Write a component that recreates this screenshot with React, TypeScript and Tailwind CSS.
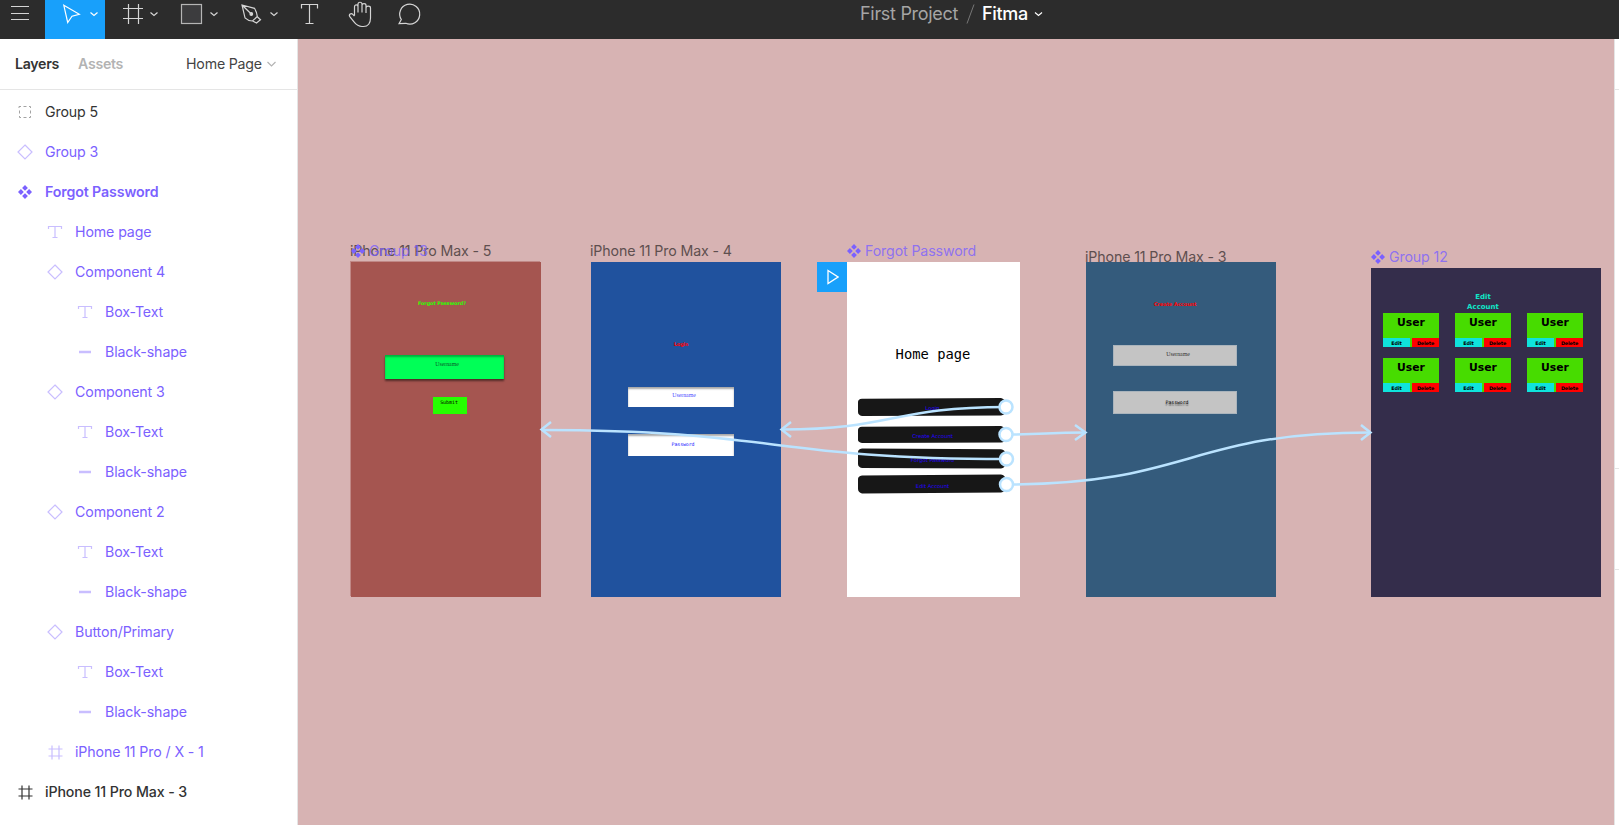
import type { ReactNode } from 'react';

type IconKind = 'group' | 'instance' | 'component' | 'text' | 'line' | 'frame';

type Layer = { name: string; icon: IconKind; depth: 0 | 1 | 2; tone: 'dark' | 'purple'; strong?: 'semibold' | 'medium' };

const layers: Layer[] = [
  { name: 'Group 5', icon: 'group', depth: 0, tone: 'dark' },
  { name: 'Group 3', icon: 'instance', depth: 0, tone: 'purple' },
  { name: 'Forgot Password', icon: 'component', depth: 0, tone: 'purple', strong: 'semibold' },
  { name: 'Home page', icon: 'text', depth: 1, tone: 'purple' },
  { name: 'Component 4', icon: 'instance', depth: 1, tone: 'purple' },
  { name: 'Box-Text', icon: 'text', depth: 2, tone: 'purple' },
  { name: 'Black-shape', icon: 'line', depth: 2, tone: 'purple' },
  { name: 'Component 3', icon: 'instance', depth: 1, tone: 'purple' },
  { name: 'Box-Text', icon: 'text', depth: 2, tone: 'purple' },
  { name: 'Black-shape', icon: 'line', depth: 2, tone: 'purple' },
  { name: 'Component 2', icon: 'instance', depth: 1, tone: 'purple' },
  { name: 'Box-Text', icon: 'text', depth: 2, tone: 'purple' },
  { name: 'Black-shape', icon: 'line', depth: 2, tone: 'purple' },
  { name: 'Button/Primary', icon: 'instance', depth: 1, tone: 'purple' },
  { name: 'Box-Text', icon: 'text', depth: 2, tone: 'purple' },
  { name: 'Black-shape', icon: 'line', depth: 2, tone: 'purple' },
  { name: 'iPhone 11 Pro / X - 1', icon: 'frame', depth: 1, tone: 'purple' },
  { name: 'iPhone 11 Pro Max - 3', icon: 'frame', depth: 0, tone: 'dark', strong: 'medium' },
];

const indent = { 0: 'pl-[17px]', 1: 'pl-[47px]', 2: 'pl-[77px]' };
const weight = { semibold: 'font-semibold', medium: 'font-medium' };

function ComponentMark({ className = '' }: { className?: string }) {
  return (
    <svg viewBox="0 0 16 16" className={`size-4 shrink-0 fill-[#7b61ff] ${className}`}>
      <path d="M8 1l2.900 2.900L8 6.800 5.100 3.900zM8 9.200l2.900 2.900L8 15l-2.900-2.900zM3.900 5.100L6.800 8l-2.900 2.900L1 8zM12.100 5.100L15 8l-2.900 2.900L9.200 8z" />
    </svg>
  );
}

function LayerIcon({ kind, dark }: { kind: IconKind; dark: boolean }) {
  if (kind === 'component') return <ComponentMark />;
  const stroke = dark ? 'stroke-[#333]' : 'stroke-[#c9beff]';
  return (
    <svg viewBox="0 0 16 16" fill="none" className={`size-4 shrink-0 ${stroke}`}>
      {kind === 'group' && (
        <path
          stroke="#a3a3a3"
          d="M2 4V2.500h2M6.500 2.500h3M12 2.500h1.500V4M13.500 6.500v3M13.500 12v1.500H12M9.500 13.500h-3M4 13.500H2.500V12M2.500 9.500v-3"
        />
      )}
      {kind === 'instance' && <path strokeWidth="1.200" d="M8 1L15 8L8 15L1 8Z" />}
      {kind === 'text' && <path strokeWidth="1.200" d="M1.500 5V2.500h13V5M8 2.500v11M5.500 13.500h5" />}
      {kind === 'line' && <path strokeWidth="2.500" d="M2 8h12" />}
      {kind === 'frame' && <path strokeWidth="1.200" d="M5 1.500v14M12 1.500v14M1.500 5h14M1.500 12h14" />}
    </svg>
  );
}

function Tool({ box, className, children }: { box: string; className: string; children: ReactNode }) {
  return (
    <svg
      viewBox={box}
      fill="none"
      stroke="#d5d5d5"
      strokeWidth="1.2"
      className={`h-[39px] shrink-0 ${className}`}
    >
      {children}
    </svg>
  );
}

function Toolbar() {
  return (
    <header className="flex h-[39px] shrink-0 items-start bg-[#2c2c2c]">
      <Tool box="0 0 45 39" className="w-[45px]">
        <path strokeWidth="1" d="M11 6.500h18M11 13.500h18M11 19.500h18" />
      </Tool>
      <Tool box="45 0 60 39" className="w-[60px] bg-[#18a0fb]">
        <g stroke="#fff">
          <path d="M63.800 5.300L79.300 14.300L72 16.200L67.700 22.500Z" />
          <path d="M90.500 12.500l3.500 3 3.500-3" />
        </g>
      </Tool>
      <Tool box="105 0 60 39" className="w-[60px]">
        <path d="M128.500 4v20M138.500 4v20M123 8.500h20M123 18.500h20M150.500 12.500l3.500 3 3.500-3" />
      </Tool>
      <Tool box="165 0 60 39" className="w-[60px]">
        <rect x="181.500" y="4.500" width="20" height="19" fill="#3c3c3e" stroke="#b5b5b5" />
        <path d="M210.500 12.500l3.500 3 3.500-3" />
      </Tool>
      <Tool box="225 0 60 39" className="w-[60px]">
        <path d="M242 5l12.500 3.300c1.800 3 2.700 5.300 2.800 8.200l-4.800 4.500c-3.300-.2-5.500-1.200-7.500-3.200zM242 5l8.500 8.300M257.300 16.800l3.200 3-4 3.200-3.800-2" />
        <circle cx="251.300" cy="14" r="1.300" fill="#d5d5d5" />
        <path d="M270.500 12.500l3.500 3 3.500-3" />
      </Tool>
      <Tool box="285 0 50 39" className="w-[50px]">
        <path d="M301.500 8.500v-4h16v4M309.500 4.500v19M305.500 23.500h8" />
      </Tool>
      <Tool box="335 0 50 39" className="w-[50px]">
        <path d="M354.500 15.500V6.800c0-2.500 3.500-2.500 3.500 0V12.500M358 6.500V4.200c0-2.600 4-2.600 4 0V12.500M362 5.500c0-2.400 4-2.400 4 0V13M366 8c0-2.400 4.500-2.400 4.500 0v10c0 5-2.500 8.500-7 8.500h-1.500c-4 0-6-2-8-4.600l-4-5c-1.800-2.400 1.200-4.400 2.800-2.600l1.700 1.700" />
      </Tool>
      <Tool box="385 0 50 39" className="w-[50px]">
        <path d="M399 23.700l2.300-4.200A10 10 0 1 1 405.800 23.300Z" />
      </Tool>
      <div className="flex h-7 items-center pl-[425px] font-[Inter] text-[18px] leading-7 tracking-[-0.3px]">
        <span className="w-[98px] whitespace-nowrap text-[#a5a5a5]">First Project</span>
        <svg viewBox="0 0 9 20" className="mr-[7px] ml-2 h-5 w-[9px]" fill="none" stroke="#777">
          <path d="M8 .5L1 19.500" />
        </svg>
        <span className="w-[45px] font-medium text-white">Fitma</span>
        <svg viewBox="0 0 9 6" className="ml-[7px] h-1.500 w-[9px]" fill="none" stroke="#fff" strokeWidth="1.200">
          <path d="M1 1.500l3.500 3 3.500-3" />
        </svg>
      </div>
    </header>
  );
}

function Sidebar() {
  return (
    <aside className="flex w-[298px] shrink-0 flex-col border-r border-[#e5e5e5] bg-white text-[14.200px] tracking-[-0.12px]">
      <div className="flex h-[51px] shrink-0 items-center border-b border-[#e5e5e5] pl-[15px] whitespace-nowrap">
        <span className="w-[63px] font-semibold tracking-[-0.3px] text-[#333]">Layers</span>
        <span className="w-[108px] font-semibold tracking-[-0.3px] text-[#b3b3b3]">Assets</span>
        <span className="tracking-[-0.2px] text-[#444]">Home Page</span>
        <svg viewBox="0 0 9 6" className="ml-[5px] h-1.500 w-[9px]" fill="none" stroke="#b3b3b3" strokeWidth="1.200">
          <path d="M.5 1l4 4 4-4" />
        </svg>
      </div>
      <ul className="flex flex-col pt-0.5">
        {layers.map((layer, i) => (
          <li
            key={i}
            className={`flex h-10 shrink-0 items-center gap-3 ${indent[layer.depth]} ${layer.tone === 'dark' ? 'text-[#333]' : 'text-[#7b61ff]'} ${layer.strong ? weight[layer.strong] : ''}`}
          >
            <LayerIcon kind={layer.icon} dark={layer.tone === 'dark'} />
            <span>{layer.name}</span>
          </li>
        ))}
      </ul>
    </aside>
  );
}

function FrameLabel({ className, mark, children }: { className: string; mark?: boolean; children: ReactNode }) {
  return (
    <div
      className={`absolute flex h-5 items-center gap-[3px] whitespace-nowrap text-[14.200px] tracking-[-0.12px] ${mark ? 'text-[#7b61ff]/80' : 'text-[#5e4f4f]'} ${className}`}
    >
      {mark && <ComponentMark className="-ml-px" />}
      <span>{children}</span>
    </div>
  );
}

function Tiny({ className, children }: { className: string; children: ReactNode }) {
  return <div className={`absolute flex justify-center leading-[8px] whitespace-nowrap ${className}`}>{children}</div>;
}

const menu = [
  { label: 'Login', box: 'top-[136px] h-[18px]', text: 'top-[6px]', shape: 'M0 4Q0 1 4 .8L143 0Q147 1 147 4V14Q147 17 143 17.500L4 18Q0 17 0 14Z' },
  { label: 'Create Account', box: 'top-[164px] h-[17px]', text: 'top-[6px]', shape: 'M0 4Q0 1 4 .8L143 0Q147 1 147 4V14Q147 16 143 16.500L4 17Q0 16 0 14Z' },
  { label: 'Forgot Password', box: 'top-[186px] h-[21px]', text: 'top-[8px]', shape: 'M0 4Q0 1 4 .5L143 1.300Q147 2 147 5V16Q147 20 143 20.500L4 20Q0 19 0 16Z' },
  { label: 'Edit Account', box: 'top-[212px] h-[20px]', text: 'top-[8px]', shape: 'M0 5Q0 2 4 1.500L143 0.500Q147 1 147 4V15Q147 18 143 18.500L4 19.500Q0 18 0 15Z' },
];

function UserCard() {
  return (
    <div className="flex h-[34px] w-14 flex-col justify-between bg-[#47dc00] font-['DejaVu_Sans'] font-bold text-black">
      <div className="pt-px text-center text-[10.800px] leading-[17px]">User</div>
      <div className="flex justify-between text-center text-[4.900px] leading-[11px] tracking-[-0.15px]">
        <span className="h-[9px] w-[27px] bg-[#0fe3dc]">Edit</span>
        <span className="h-[9px] w-[27px] bg-[#ff0000]">Delete</span>
      </div>
    </div>
  );
}

function Connectors() {
  return (
    <svg viewBox="298 39 1316 786" fill="none" className="absolute inset-0 h-[786px] w-[1316px]">
      <g stroke="#bae3ff" strokeWidth="2.500">
        <path d="M1006 407C893 407 893 429.500 782 429.500" />
        <path d="M1006 434.500C1046 434.500 1046 432.500 1085 432.500" />
        <path d="M1006 459C773 459 773 430 542 430" />
        <path d="M1007 484.500C1189 484.500 1189 432.500 1370 432.500" />
        <path d="M551 422L541.500 429.500L551 437M791 422L781.500 429.500L791 437M1075 425L1085.500 432.500L1075 440M1361 425L1370.500 432.500L1361 440" />
      </g>
      <g fill="#fff" stroke="#bae3ff" strokeWidth="2.500">
        <circle cx="1006" cy="407" r="6.500" />
        <circle cx="1006" cy="434.500" r="6.500" />
        <circle cx="1006.500" cy="459" r="6.500" />
        <circle cx="1006.500" cy="484.500" r="6.500" />
      </g>
    </svg>
  );
}

function Canvas() {
  return (
    <main className="relative w-[1316px] shrink-0 overflow-hidden bg-[#d7b3b3]">
      <FrameLabel className="top-[202px] left-[52px]">iPhone 11 Pro Max - 5</FrameLabel>
      <FrameLabel mark className="top-[202px] left-[53px]">Group 13</FrameLabel>
      <section className="absolute top-[223px] left-[53px] h-[335px] w-[190px] bg-[#a55550] shadow-[-1px_-1px_0_rgba(165,85,80,0.45)]">
        <Tiny className="top-[37px] left-[61px] w-[60px] font-['DejaVu_Sans'] text-[4.900px] font-bold tracking-[-0.05px] text-[#2bff00]">
          Forgot Password?
        </Tiny>
        <div className="absolute top-[93px] left-[34px] h-6 w-[119px] bg-[#00ff57] shadow-[0_2px_2px_rgba(0,0,0,0.5),inset_0_2px_2px_rgba(0,0,0,0.3)]" />
        <Tiny className="top-[98px] left-[66px] w-[60px] font-['Liberation_Serif'] text-[5.800px] text-[#0a5a2a]">Username</Tiny>
        <div className="absolute top-[135px] left-[82px] h-[17px] w-[34px] bg-[#26ff00]" />
        <Tiny className="top-[136px] left-[82px] w-[32px] font-['DejaVu_Sans_Mono'] text-[4.900px] text-black">Submit</Tiny>
      </section>

      <FrameLabel className="top-[202px] left-[292px]">iPhone 11 Pro Max - 4</FrameLabel>
      <section className="absolute top-[223px] left-[293px] h-[335px] w-[190px] bg-[#20529e]">
        <Tiny className="top-[78px] left-[60px] w-[60px] font-['DejaVu_Sans'] text-[5px] font-bold tracking-[-0.2px] text-[#ff0000]">Login</Tiny>
        <div className="absolute top-[125px] left-[37px] h-5 w-[106px] bg-white shadow-[inset_0_2px_2px_rgba(0,0,0,0.35)]" />
        <Tiny className="top-[129px] left-[63px] w-[60px] font-['Liberation_Serif'] text-[5.800px] text-[#4b4bff]">Username</Tiny>
        <div className="absolute top-[172px] left-[37px] h-[22px] w-[106px] bg-white shadow-[inset_0_2px_2px_rgba(0,0,0,0.35)]" />
        <Tiny className="top-[178px] left-[62px] w-[60px] font-['DejaVu_Sans_Mono'] text-[4.900px] tracking-[-0.1px] text-[#1212ff]">Password</Tiny>
      </section>

      <FrameLabel mark className="top-[202px] left-[549px]">Forgot Password</FrameLabel>
      <div className="absolute top-[223px] left-[519px] flex size-[30px] items-center justify-center bg-[#18a0fb]">
        <svg viewBox="0 0 12 16" className="ml-[2px] h-4 w-3" fill="none" stroke="#fff" strokeWidth="1.300">
          <path d="M1 1.500L11 8L1 14.500Z" />
        </svg>
      </div>
      <section className="absolute top-[223px] left-[549px] h-[335px] w-[173px] bg-white">
        <div className="absolute top-[82px] left-[42px] w-[88px] text-center font-['DejaVu_Sans_Mono'] text-[13.800px] leading-5 whitespace-nowrap text-black">
          Home page
        </div>
        {menu.map((item) => (
          <div key={item.label} className={`absolute left-[11px] w-[147px] ${item.box}`}>
            <svg className="size-full fill-[#171717]">
              <path d={item.shape} />
            </svg>
            <Tiny className={`left-[1px] w-full font-['DejaVu_Sans'] text-[5.300px] text-[#2200ff] ${item.text}`}>
              {item.label}
            </Tiny>
          </div>
        ))}
      </section>

      <FrameLabel className="top-[208px] left-[787px]">iPhone 11 Pro Max - 3</FrameLabel>
      <section className="absolute top-[223px] left-[788px] h-[335px] w-[190px] bg-[#345b7c]">
        <Tiny className="top-[38px] left-[59px] w-[60px] font-['DejaVu_Sans'] text-[5.100px] font-bold tracking-[-0.1px] text-[#ff0000]">
          Create Account
        </Tiny>
        <div className="absolute top-[83px] left-[27px] h-[21px] w-[124px] border border-[#aab4bc] bg-[#c4c4c4]" />
        <Tiny className="top-[88px] left-[62px] w-[60px] font-['Liberation_Serif'] text-[5.800px] text-[#333]">Username</Tiny>
        <div className="absolute top-[129px] left-[27px] h-[23px] w-[124px] border border-[#aab4bc] bg-[#c4c4c4]" />
        <Tiny className="top-[136px] left-[61px] w-[60px] font-['DejaVu_Sans_Mono'] text-[4.900px] tracking-[-0.1px] text-black text-shadow-[0_1.5px_1px_rgba(0,0,0,0.5)]">
          Password
        </Tiny>
      </section>

      <FrameLabel mark className="top-[208px] left-[1073px]">Group 12</FrameLabel>
      <section className="absolute top-[229px] left-[1073px] h-[329px] w-[230px] bg-[#342d4b]">
        <div className="absolute top-[24px] left-[82px] w-[60px] text-center font-['DejaVu_Sans'] text-[7px] leading-[10px] font-bold text-[#0fe8c8]">
          Edit
          <br />
          Account
        </div>
        <div className="grid grid-cols-[repeat(3,56px)] gap-x-4 gap-y-[11px] pt-[45px] pl-3">
          {[0, 1, 2, 3, 4, 5].map((n) => (
            <UserCard key={n} />
          ))}
        </div>
      </section>
      <Connectors />
    </main>
  );
}

export default function App() {
  return (
    <div className="flex h-[825px] w-[1619px] flex-col overflow-hidden font-[Inter,sans-serif]">
      <Toolbar />
      <div className="flex h-[786px]">
        <Sidebar />
        <Canvas />
        <aside className="flex grow flex-col border-l border-[#e5e5e5] bg-white">
          <div className="h-[51px] border-b border-[#e5e5e5]" />
          <div className="h-[379px] border-b border-[#e5e5e5]" />
          <div className="h-[101px] border-b border-[#e5e5e5]" />
        </aside>
      </div>
    </div>
  );
}
